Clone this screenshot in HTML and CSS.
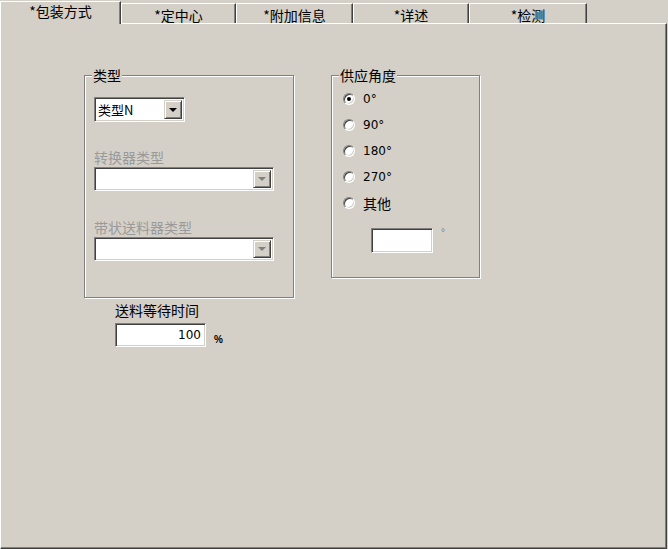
FILE: index.html
```html
<!DOCTYPE html>
<html lang="zh-CN">
<head>
  <meta charset="UTF-8" />
  <title>包装方式</title>
  <link rel="stylesheet" href="styles.css">
</head>
<body>

<div class="tabs">
  <div class="tab tab-active tab-1">*包装方式</div>
  <div class="tab tab-2">*定中心</div>
  <div class="tab tab-3">*附加信息</div>
  <div class="tab tab-4">*详述</div>
  <div class="tab tab-5">*检测</div>
</div>

<div class="panel">
  <div class="panel-row">

    <div class="col-left">
      <div class="group group-type">
        <span class="legend">类型</span>
        <div class="combo combo-short">
          <span class="combo-text">类型N</span>
          <span class="combo-btn"><span class="arrow"></span></span>
        </div>
        <div class="field-label field-first disabled">转换器类型</div>
        <div class="combo combo-wide">
          <span class="combo-text"></span>
          <span class="combo-btn"><span class="arrow arrow-off"></span></span>
        </div>
        <div class="field-label disabled">带状送料器类型</div>
        <div class="combo combo-wide">
          <span class="combo-text"></span>
          <span class="combo-btn"><span class="arrow arrow-off"></span></span>
        </div>
      </div>

      <div class="wait">
        <div class="wait-label">送料等待时间</div>
        <div class="wait-row">
          <div class="textbox textbox-num">100</div>
          <span class="unit">%</span>
        </div>
      </div>
    </div>

    <div class="group group-angle">
      <span class="legend">供应角度</span>
      <div class="radio-row"><span class="radio checked"></span><span class="radio-label">0°</span></div>
      <div class="radio-row"><span class="radio"></span><span class="radio-label">90°</span></div>
      <div class="radio-row"><span class="radio"></span><span class="radio-label">180°</span></div>
      <div class="radio-row"><span class="radio"></span><span class="radio-label">270°</span></div>
      <div class="radio-row"><span class="radio"></span><span class="radio-label radio-cjk">其他</span></div>
      <div class="other-row">
        <div class="textbox textbox-angle"></div>
        <span class="deg">°</span>
      </div>
    </div>

  </div>
</div>

</body>
</html>
```

FILE: styles.css
```css
body {
  margin: 0;
  width: 668px;
  height: 549px;
  overflow: hidden;
  background: #d4d0c8;
  color: #000;
  font-family: "Noto Sans CJK SC", "Liberation Sans", sans-serif;
  font-size: 14px;
}

/* tab strip */
.tabs {
  display: flex;
  align-items: flex-end;
  height: 23px;
}
.tab {
  box-sizing: border-box;
  height: 20px;
  padding-top: 4px;
  line-height: 14px;
  text-align: center;
  background: #d4d0c8;
  border-top: 1px solid #fff;
  border-left: 1px solid #fff;
  border-right: 1px solid #404040;
  box-shadow: inset -1px 0 #808080;
  white-space: nowrap;
}
.tab-active {
  height: 23px;
  padding-top: 2px;
  margin-bottom: -1px;
  position: relative;
  z-index: 1;
}
.tab-1 { width: 121px; }
.tab-2 { width: 115px; }
.tab-3 { width: 117px; }
.tab-4 { width: 116px; }
.tab-5 { width: 118px; }

/* page body */
.panel {
  box-sizing: border-box;
  width: 667px;
  height: 526px;
  border-top: 1px solid #fff;
  border-left: 1px solid #fff;
  border-right: 1px solid #404040;
  border-bottom: 1px solid #404040;
  box-shadow: inset -1px -1px #808080;
  padding: 51px 0 0 83px;
}
.panel-row {
  display: flex;
  align-items: flex-start;
  gap: 37px;
}
.col-left {
  width: 210px;
}

/* etched group box */
.group {
  position: relative;
  box-sizing: border-box;
  border: 1px solid #808080;
  box-shadow: inset 1px 1px #fff, 1px 1px #fff;
}
.legend {
  position: absolute;
  top: -9px;
  left: 7px;
  padding: 0 1px;
  line-height: 16px;
  background: #d4d0c8;
}
.group-type {
  height: 223px;
  padding: 21px 0 0 9px;
}
.group-angle {
  width: 149px;
  height: 203px;
  padding: 10px 0 0 11px;
}

/* combo boxes and text fields */
.combo, .textbox {
  box-sizing: border-box;
  background: #fff;
  border: 1px solid;
  border-color: #808080 #fff #fff #808080;
  box-shadow: inset 1px 1px #404040, inset -1px -1px #d4d0c8;
}
.combo {
  display: flex;
  height: 24px;
  padding: 2px;
}
.combo-short {
  width: 91px;
  height: 25px;
}
.combo-wide {
  width: 180px;
}
.combo-text {
  flex: 1;
  line-height: 19px;
  font-size: 13px;
  padding-left: 1px;
}
.combo-btn {
  box-sizing: border-box;
  width: 18px;
  display: flex;
  align-items: center;
  justify-content: center;
  background: #d4d0c8;
  border: 1px solid;
  border-color: #d4d0c8 #404040 #404040 #d4d0c8;
  box-shadow: inset 1px 1px #fff, inset -1px -1px #808080;
}
.arrow {
  width: 0;
  height: 0;
  border-top: 4px solid #000;
  border-left: 4px solid transparent;
  border-right: 4px solid transparent;
}
.arrow-off {
  border-top-color: #808080;
}

.field-label {
  line-height: 16px;
  margin: 28px 0 2px;
}
.field-first {
  margin-top: 27px;
}
.disabled {
  color: #9a9a9a;
}

/* wait time */
.wait {
  margin: 4px 0 0 31px;
}
.wait-label {
  line-height: 16px;
}
.wait-row {
  display: flex;
  align-items: flex-end;
  margin-top: 5px;
}
.textbox {
  height: 24px;
}
.textbox-num {
  width: 91px;
  padding: 0 4px;
  text-align: right;
  font-family: "DejaVu Sans", sans-serif;
  font-size: 12px;
  line-height: 22px;
}
.unit {
  margin: 0 0 1px 8px;
  font-family: "Liberation Sans", sans-serif;
  font-size: 10px;
  font-weight: bold;
  line-height: 12px;
}

/* radio buttons */
.radio-row {
  display: flex;
  align-items: center;
  height: 26px;
}
.radio {
  position: relative;
  box-sizing: border-box;
  width: 12px;
  height: 12px;
  border-radius: 50%;
  background: #fff;
  border: 1px solid;
  border-color: #808080 #fff #fff #808080;
  box-shadow: inset 1px 1px #404040, inset -1px -1px #d4d0c8;
}
.checked::after {
  content: "";
  position: absolute;
  top: 3px;
  left: 3px;
  width: 4px;
  height: 4px;
  border-radius: 50%;
  background: #000;
}
.radio-label {
  margin-left: 8px;
  font-family: "DejaVu Sans", sans-serif;
  font-size: 12px;
}
.radio-cjk {
  font-family: "Noto Sans CJK SC", sans-serif;
  font-size: 14px;
}

.other-row {
  display: flex;
  align-items: flex-start;
  margin: 12px 0 0 28px;
}
.textbox-angle {
  width: 62px;
  height: 25px;
}
.deg {
  margin-left: 8px;
  font-family: "Liberation Sans", sans-serif;
  font-size: 10px;
  line-height: 10px;
  color: #808080;
}
```
